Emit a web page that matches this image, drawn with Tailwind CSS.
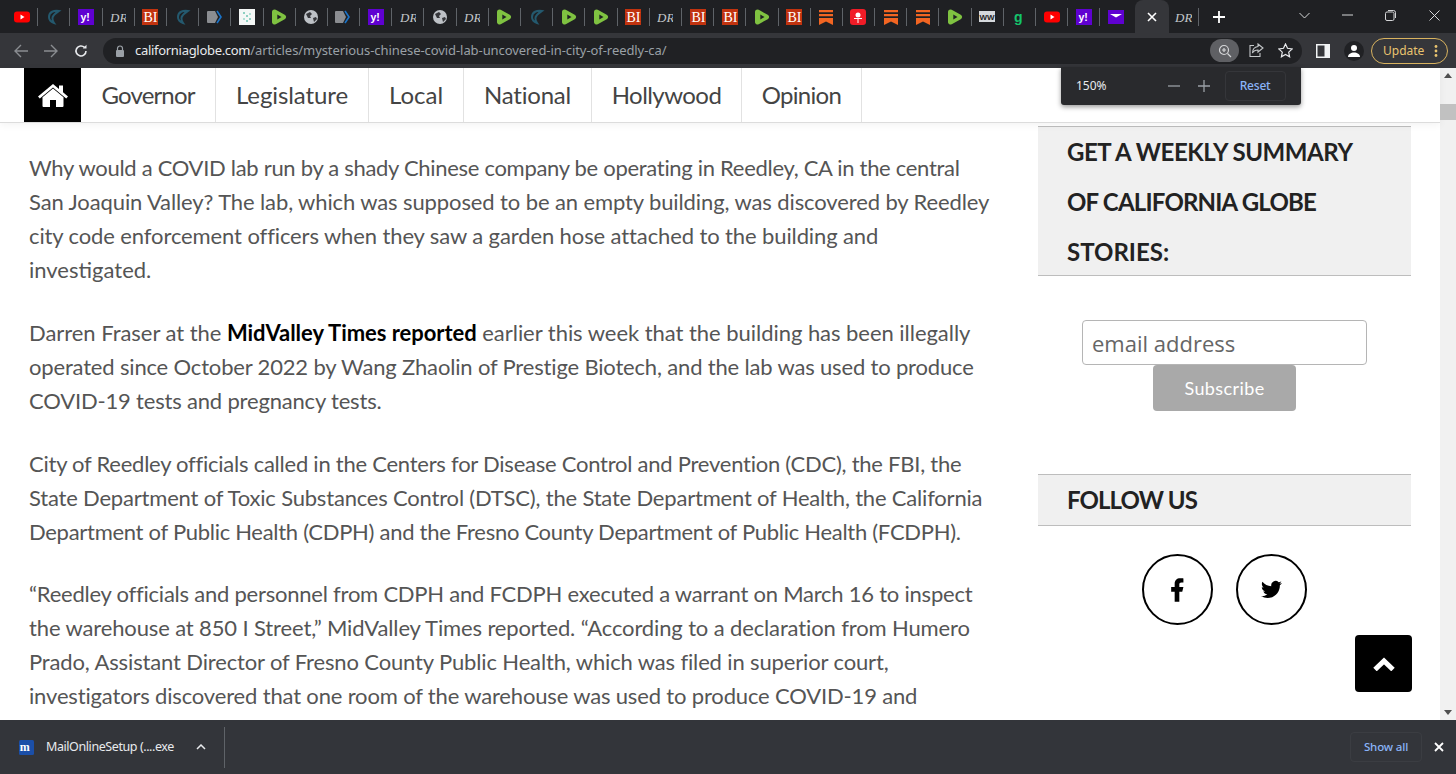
<!DOCTYPE html>
<html lang="en">
<head>
  <meta charset="UTF-8" />
  <title>Mysterious Chinese Covid Lab Uncovered in City of Reedly, CA</title>
  <script src="https://cdn.jsdelivr.net/npm/@tailwindcss/browser@4"></script>
</head>
<body class="h-screen w-screen overflow-hidden flex flex-col bg-white font-['Lato',sans-serif]">

  <!-- tab strip -->
  <div class="h-[33px] shrink-0 bg-[#1f2023] flex items-stretch pl-[6px] relative">
    <div id="tabs" class="flex items-stretch"></div>
    <div class="w-[34px] h-[33px] bg-[#35363a] rounded-t-lg flex items-center justify-center ml-[2px]">
      <svg width="10" height="10" viewBox="0 0 10 10" stroke="#fff" stroke-width="1.6"><path d="M1 1l8 8M9 1l-8 8"/></svg>
    </div>
    <div class="w-[30px] flex items-center justify-center">
      <div class="w-full h-[18px] flex items-center justify-center border-r border-[#5f6368]">
        <svg width="18" height="16" viewBox="0 0 18 16"><text x="1" y="12.500" fill="#c4c7c9" font-size="13" font-style="italic" font-family="Liberation Serif">DR</text></svg>
      </div>
    </div>
    <div class="w-[41px] flex items-center justify-center">
      <svg width="12" height="12" viewBox="0 0 12 12" stroke="#fff" stroke-width="1.8"><path d="M6 0v12M0 6h12"/></svg>
    </div>
    <div class="ml-auto flex items-center h-[30px] text-[#d5d6d8]">
      <div class="w-[43px] flex justify-center"><svg width="11" height="7" viewBox="0 0 11 7" fill="none" stroke="currentColor"><path d="M.5 1l5 5 5-5"/></svg></div>
      <div class="w-[43px] flex justify-center"><svg width="11" height="2" viewBox="0 0 11 2" stroke="currentColor"><path d="M0 1h11"/></svg></div>
      <div class="w-[43px] flex justify-center"><svg width="11" height="11" viewBox="0 0 11 11" fill="none" stroke="currentColor"><rect x=".5" y="2" width="8.5" height="8.5" rx="1.5"/><path d="M3 .5h5.500a2 2 0 0 1 2 2V8"/></svg></div>
      <div class="w-[44px] flex justify-center"><svg width="11" height="11" viewBox="0 0 11 11" stroke="currentColor"><path d="M.5.5l10 10M10.500.5l-10 10"/></svg></div>
    </div>
  </div>

  <!-- toolbar -->
  <div class="h-[35px] shrink-0 bg-[#35363a] flex items-center relative">
    <div class="w-[103px] flex items-center pl-[14px] gap-[16px] shrink-0">
      <svg width="14" height="14" viewBox="0 0 14 14" fill="none" stroke="#8a8d91" stroke-width="1.4"><path d="M14 7H1M7 1L1 7l6 6"/></svg>
      <svg width="14" height="14" viewBox="0 0 14 14" fill="none" stroke="#8a8d91" stroke-width="1.4"><path d="M0 7h13M7 1l6 6-6 6"/></svg>
      <svg width="14" height="14" viewBox="0 0 14 14" fill="none" stroke="#e8eaed" stroke-width="1.6"><path d="M12 7a5 5 0 1 1-1.500-3.600"/><path d="M12.500 .8v3.700H8.800" fill="#e8eaed" stroke="none"/></svg>
    </div>
    <div class="w-[1199px] h-[26px] shrink-0 rounded-full bg-[#202124] flex items-center pl-[11px] pr-[5px] font-['Noto_Sans',sans-serif] text-[13px]">
      <svg width="10" height="12" viewBox="0 0 10 12" class="mr-[10px] ml-[1px]"><path d="M2.500 5V3.500a2.500 2.500 0 0 1 5 0V5" fill="none" stroke="#9aa0a6" stroke-width="1.200"/><rect x="1" y="5" width="8" height="7" rx="1" fill="#9aa0a6"/></svg>
      <span class="text-[#e8eaed] whitespace-nowrap tracking-[-0.3px]">californiaglobe.com<span class="text-[#9aa0a6] tracking-[-0.07px]">/articles/mysterious-chinese-covid-lab-uncovered-in-city-of-reedly-ca/</span></span>
      <div class="ml-auto flex items-center gap-[3px]">
        <div class="w-[29px] h-[23px] rounded-full bg-[#5f6064] flex items-center justify-center">
          <svg width="14" height="14" viewBox="0 0 14 14" fill="none" stroke="#d5d6d8" stroke-width="1.200"><circle cx="6" cy="6" r="4.500"/><path d="M9.500 9.500L13 13M4 6h4M6 4v4"/></svg>
        </div>
        <div class="w-[29px] flex justify-center">
          <svg width="15" height="15" viewBox="0 0 15 15" fill="none" stroke="#c4c7c9" stroke-width="1.100"><path d="M9 1l5 4-5 4V7C6 7 4.500 8 3.500 10c0-3.500 2-6 5.500-6.500z"/><path d="M5 2.500H1v11h10V10"/></svg>
        </div>
        <div class="w-[23px] flex justify-center">
          <svg width="15" height="15" viewBox="0 0 15 15" fill="none" stroke="#e8eaed" stroke-width="1.200"><path d="M7.500 1l2 4.300 4.700.6-3.500 3.200.9 4.700-4.100-2.300-4.100 2.300.9-4.700L.8 5.900l4.700-.6z"/></svg>
        </div>
      </div>
    </div>
    <div class="flex items-center pl-[14px]">
      <svg width="14" height="14" viewBox="0 0 14 14" class="mr-[14px]"><rect width="14" height="14" fill="#f1f3f4"/><rect x="1.500" y="1.500" width="7" height="11" fill="#35363a"/></svg>
      <div class="w-[20px] h-[20px] rounded-full bg-[#202124] flex items-center justify-center mr-[7px]">
        <svg width="14" height="14" viewBox="0 0 14 14" fill="#fff"><circle cx="7" cy="4" r="3"/><path d="M1 13c0-3 3-4.500 6-4.500s6 1.500 6 4.500z"/></svg>
      </div>
      <div class="w-[77px] h-[26px] rounded-full border border-[#d9b35f] flex items-center pl-[11px] font-['Noto_Sans',sans-serif] text-[12px] text-[#e9c46f]">
        Update
        <svg width="4" height="12" viewBox="0 0 4 12" fill="#e9c46f" class="ml-[10px]"><circle cx="2" cy="1.500" r="1.400"/><circle cx="2" cy="6" r="1.400"/><circle cx="2" cy="10.500" r="1.400"/></svg>
      </div>
    </div>
  </div>

  <!-- page -->
  <div class="flex-1 min-h-0 relative flex bg-white">
    <div class="flex-1 min-w-0 flex flex-col">
      <nav class="h-[55px] shrink-0 border-b border-[#dcdcdc] pl-[24px] flex items-stretch text-[24px] text-[#444] shadow-[0_2px_8px_rgba(0,0,0,0.05)] relative">
        <a class="w-[57px] bg-black flex items-center justify-center">
          <svg width="30" height="25" viewBox="0 0 30 25" fill="#fff"><path d="M15 5.500L4.500 14.200V23a1 1 0 0 0 1 1h6.500v-7h6v7h6.500a1 1 0 0 0 1-1v-8.800z"/><path d="M15 1L0 13.500l1.800 2L15 4.500l13.200 11 1.800-2-5-4.200V2.500h-4v3.500z"/></svg>
        </a>
        <a class="w-[135px] flex items-center justify-center border-r border-[#e2e2e2] tracking-[-0.85px]">Governor</a>
        <a class="w-[153px] flex items-center justify-center border-r border-[#e2e2e2] tracking-[-0.1px]">Legislature</a>
        <a class="w-[95px] flex items-center justify-center border-r border-[#e2e2e2]">Local</a>
        <a class="w-[128px] flex items-center justify-center border-r border-[#e2e2e2] tracking-[-0.2px]">National</a>
        <a class="w-[150px] flex items-center justify-center border-r border-[#e2e2e2] tracking-[-0.55px]">Hollywood</a>
        <a class="w-[120px] flex items-center justify-center border-r border-[#e2e2e2] tracking-[-0.7px]">Opinion</a>
      </nav>

      <div class="flex-1 min-h-0 overflow-hidden flex">
        <article class="w-[1038px] shrink-0 pl-[29px] pt-[28px] text-[22px] leading-[34px] text-[#555] whitespace-nowrap flex flex-col gap-[29px]">
          <p>
            <span class="block tracking-[-0.3px]">Why would a COVID lab run by a shady Chinese company be operating in Reedley, CA in the central</span>
            <span class="block tracking-[-0.11px]">San Joaquin Valley? The lab, which was supposed to be an empty building, was discovered by Reedley</span>
            <span class="block tracking-[-0.11px]">city code enforcement officers when they saw a garden hose attached to the building and</span>
            <span class="block">investigated.</span>
          </p>
          <p>
            <span class="block tracking-[-0.04px]">Darren Fraser at the <a class="font-bold text-black">MidValley Times reported</a> earlier this week that the building has been illegally</span>
            <span class="block tracking-[-0.17px]">operated since October 2022 by Wang Zhaolin of Prestige Biotech, and the lab was used to produce</span>
            <span class="block tracking-[-0.18px]">COVID-19 tests and pregnancy tests.</span>
          </p>
          <p>
            <span class="block tracking-[-0.245px]">City of Reedley officials called in the Centers for Disease Control and Prevention (CDC), the FBI, the</span>
            <span class="block tracking-[-0.19px]">State Department of Toxic Substances Control (DTSC), the State Department of Health, the California</span>
            <span class="block tracking-[-0.285px]">Department of Public Health (CDPH) and the Fresno County Department of Public Health (FCDPH).</span>
          </p>
          <p class="-mt-[1px]">
            <span class="block tracking-[-0.23px]">“Reedley officials and personnel from CDPH and FCDPH executed a warrant on March 16 to inspect</span>
            <span class="block tracking-[-0.13px]">the warehouse at 850 I Street,” MidValley Times reported. “According to a declaration from Humero</span>
            <span class="block tracking-[-0.14px]">Prado, Assistant Director of Fresno County Public Health, which was filed in superior court,</span>
            <span class="block tracking-[-0.16px]">investigators discovered that one room of the warehouse was used to produce COVID-19 and</span>
          </p>
        </article>

        <aside class="w-[373px] shrink-0 pt-[3px]">
          <div class="bg-[#f0f0f0] border-y border-[#bdbdbd] pl-[29px] text-[24px] leading-[50px] font-bold text-[#222] h-[150px]">
            <h3>
              <span class="block tracking-[-0.45px]">GET A WEEKLY SUMMARY</span>
              <span class="block tracking-[-0.8px]">OF CALIFORNIA GLOBE</span>
              <span class="block">STORIES:</span>
            </h3>
          </div>
          <div class="flex flex-col items-center mt-[44px]">
            <input class="w-[285px] h-[45px] border border-[#b5b5b5] rounded-[4px] px-[9px] font-['Open_Sans',sans-serif] text-[22px] text-[#555] placeholder:text-[#666]" placeholder="email address" />
            <button class="w-[143px] h-[46px] bg-[#a9a9a9] rounded-[4px] text-white text-[18px] tracking-[0.4px]">Subscribe</button>
          </div>
          <div class="bg-[#f0f0f0] border-y border-[#bdbdbd] pl-[29px] h-[52px] mt-[63px] flex items-center text-[24px] font-bold text-[#222]">
            <h3 class="tracking-[-0.9px]">FOLLOW US</h3>
          </div>
          <div class="flex justify-center gap-[23px] mt-[28px] pr-[1px]">
            <a class="w-[71px] h-[71px] rounded-full border-[2px] border-black flex items-center justify-center">
              <svg width="28" height="28" viewBox="0 0 24 24"><path d="M14 13.500h2.500l1-4H14v-2c0-1.030 0-2 2-2h1.500V2.140c-.326-.043-1.557-.14-2.857-.14C11.928 2 10 3.657 10 6.700v2.800H7v4h3V22h4v-8.500z"/></svg>
            </a>
            <a class="w-[71px] h-[71px] rounded-full border-[2px] border-black flex items-center justify-center">
              <svg width="21" height="21" viewBox="0 0 24 24"><path d="M23.953 4.570a10 10 0 01-2.825.775 4.958 4.958 0 002.163-2.723c-.951.555-2.005.959-3.127 1.184a4.920 4.920 0 00-8.384 4.482C7.690 8.095 4.067 6.130 1.640 3.162a4.822 4.822 0 00-.666 2.475c0 1.710.870 3.213 2.188 4.096a4.904 4.904 0 01-2.228-.616v.060a4.923 4.923 0 003.946 4.827 4.996 4.996 0 01-2.212.085 4.936 4.936 0 004.604 3.417 9.867 9.867 0 01-6.102 2.105c-.390 0-.779-.023-1.170-.067a13.995 13.995 0 007.557 2.209c9.053 0 13.998-7.496 13.998-13.985 0-.210 0-.420-.015-.630A9.935 9.935 0 0024 4.590z"/></svg>
            </a>
          </div>
        </aside>
      </div>
    </div>

    <!-- scrollbar -->
    <div class="w-[16px] shrink-0 bg-[#f1f1f1] flex flex-col items-center justify-between py-[5px]">
      <svg width="8" height="5" viewBox="0 0 8 5" fill="#505050"><path d="M4 0l4 5H0z"/></svg>
      <svg width="8" height="5" viewBox="0 0 8 5" fill="#505050"><path d="M0 0h8L4 5z"/></svg>
    </div>
    <div class="absolute right-0 top-[36px] w-[16px] h-[16px] bg-[#c1c1c1]"></div>

    <!-- zoom bubble -->
    <div class="absolute left-[1061px] -top-[1px] w-[240px] h-[38px] bg-[#292a2d] rounded-b-[3px] shadow-[0_2px_5px_rgba(0,0,0,0.4)] flex items-center pl-[15px] font-['Noto_Sans',sans-serif] text-[12px] text-[#e8eaed]">
      <span>150%</span>
      <svg width="12" height="12" viewBox="0 0 12 12" stroke="#9aa0a6" stroke-width="1.300" class="ml-[61px]"><path d="M0 6h12"/></svg>
      <svg width="12" height="12" viewBox="0 0 12 12" stroke="#9aa0a6" stroke-width="1.300" class="ml-[18px]"><path d="M0 6h12M6 0v12"/></svg>
      <div class="ml-[15px] w-[61px] h-[30px] border border-[#35363a] rounded-[4px] flex items-center justify-center text-[#8ab4f8] font-medium tracking-[-0.2px]">Reset</div>
    </div>

    <!-- back to top -->
    <a class="absolute left-[1355px] top-[567px] w-[57px] h-[57px] bg-black rounded-[4px] flex items-center justify-center">
      <svg width="22" height="14" viewBox="0 0 22 14" fill="none" stroke="#fff" stroke-width="5"><path d="M2 12.500l9-8.500 9 8.500"/></svg>
    </a>
  </div>

  <!-- downloads bar -->
  <div class="h-[54px] shrink-0 bg-[#33353a] flex items-center font-['Noto_Sans',sans-serif] text-[12.5px] text-[#e8eaed]">
    <svg width="15" height="15" viewBox="0 0 15 15" class="ml-[19px]"><rect width="15" height="15" rx="1.500" fill="#1b4fa8"/><text x=".8" y="11" font-size="12" font-weight="bold" fill="#fff" font-family="Liberation Serif">m</text></svg>
    <span class="ml-[12px] whitespace-nowrap tracking-[-0.42px]">MailOnlineSetup (....exe</span>
    <svg width="10" height="6" viewBox="0 0 10 6" fill="none" stroke="#e8eaed" stroke-width="1.500" class="ml-[22px]"><path d="M1 5l4-4 4 4"/></svg>
    <div class="w-[1px] h-[41px] bg-[#5f6368] ml-[18px]"></div>
    <div class="ml-auto w-[72px] h-[30px] border border-[#3b3d42] rounded-[4px] flex items-center justify-center text-[#8ab4f8] text-[11.5px] font-medium tracking-[-0.15px] mr-[12px]">Show all</div>
    <svg width="10" height="10" viewBox="0 0 10 10" stroke="#fff" stroke-width="1.800" class="mr-[12px]"><path d="M1 1l8 8M9 1l-8 8"/></svg>
  </div>

  <script>
    // favicons for the tab strip
    const icons = {
      yt: '<rect y="2.500" width="16" height="11" rx="3" fill="#f00"/><path d="M6.500 5.500l4 2.500-4 2.500z" fill="#fff"/>',
      cr: '<path d="M13 2C8 1 3 3 3 8c0 3 2 5 5 6-2-3-2-6 0-8 1.500-2 3.500-3 5-4z" fill="none" stroke="#24596e" stroke-width="2"/>',
      ya: '<rect width="16" height="16" fill="#5f01d1"/><text x="2.500" y="12" font-size="10.500" font-weight="bold" fill="#fff" font-family="Liberation Sans">y!</text>',
      dr: '<text x="0" y="12.500" font-size="13" font-style="italic" fill="#c4c7c9" font-family="Liberation Serif">DR</text>',
      bi: '<rect width="16" height="16" fill="#c1330f"/><text x="1.500" y="13" font-size="14" fill="#fff" font-family="Liberation Serif">BI</text>',
      db: '<path d="M0 3a1 1 0 0 1 1-1h7l3 6-3 6H1a1 1 0 0 1-1-1z" fill="#8b8d91"/><path d="M10 2l4 6-4 6" fill="none" stroke="#1a73c9" stroke-width="1.600"/>',
      im: '<rect width="16" height="16" fill="#f4f7f6"/><circle cx="5" cy="4" r="1" fill="#6cc3b0"/><circle cx="8" cy="7" r="1" fill="#6cc3b0"/><circle cx="11" cy="10" r="1" fill="#6cc3b0"/><circle cx="5" cy="10" r="1" fill="#9ad7ca"/><circle cx="11" cy="5" r="1" fill="#9ad7ca"/><circle cx="8" cy="12" r="1" fill="#6cc3b0"/>',
      ru: '<path d="M3.500 3L12.500 8l-9 5z" fill="#7fc241" stroke="#7fc241" stroke-width="5" stroke-linejoin="round"/><path d="M6.300 5.500L10.500 8l-4.200 2.500z" fill="#1f2023"/>',
      gl: '<circle cx="8" cy="8" r="7" fill="#bdc1c6"/><path d="M3 5l4-2 2 2-2 2 1 2-3 0zM10 9l3-1 1 2-3 3z" fill="#35363a"/>',
      bm: '<path d="M1 1h14v2.200H1zM1 5h14v2.200H1zM1 9h14v7l-7-3.500L1 16z" fill="#f26522"/>',
      mc: '<rect width="16" height="16" rx="3" fill="#f01c27"/><circle cx="8" cy="6" r="2.500" fill="#fff"/><path d="M4 9h8v1H8.500v4h-1v-4H4z" fill="#fff"/>',
      ws: '<rect y="2" width="16" height="11" fill="#d5d8dc"/><text x=".5" y="11" font-size="8" font-weight="bold" fill="#222" font-family="Liberation Sans">WW</text>',
      gg: '<text x="3" y="12.500" font-size="14" font-weight="bold" fill="#14c46b" font-family="Liberation Sans">g</text>',
      ma: '<rect y="1" width="16" height="14" fill="#5f01d1"/><path d="M2 5h12L8 8.500z" fill="#fff"/>'
    };
    const order = ['yt','cr','ya','dr','bi','cr','db','im','ru','gl','db','ya','dr','gl','dr','ru','cr','ru','ru','bi','dr','bi','bi','ru','bi','bm','mc','bm','bm','ru','ws','gg','yt','ya','ma'];
    document.getElementById('tabs').innerHTML = order.map((name, i) => `
      <div class="w-[32.2px] flex items-center justify-center">
        <div class="w-full h-[18px] flex items-center justify-center ${i < order.length - 1 ? 'border-r border-[#5f6368]' : ''}">
          <svg width="16" height="16" viewBox="0 0 16 16">${icons[name]}</svg>
        </div>
      </div>`).join('');
  </script>

</body>
</html>
